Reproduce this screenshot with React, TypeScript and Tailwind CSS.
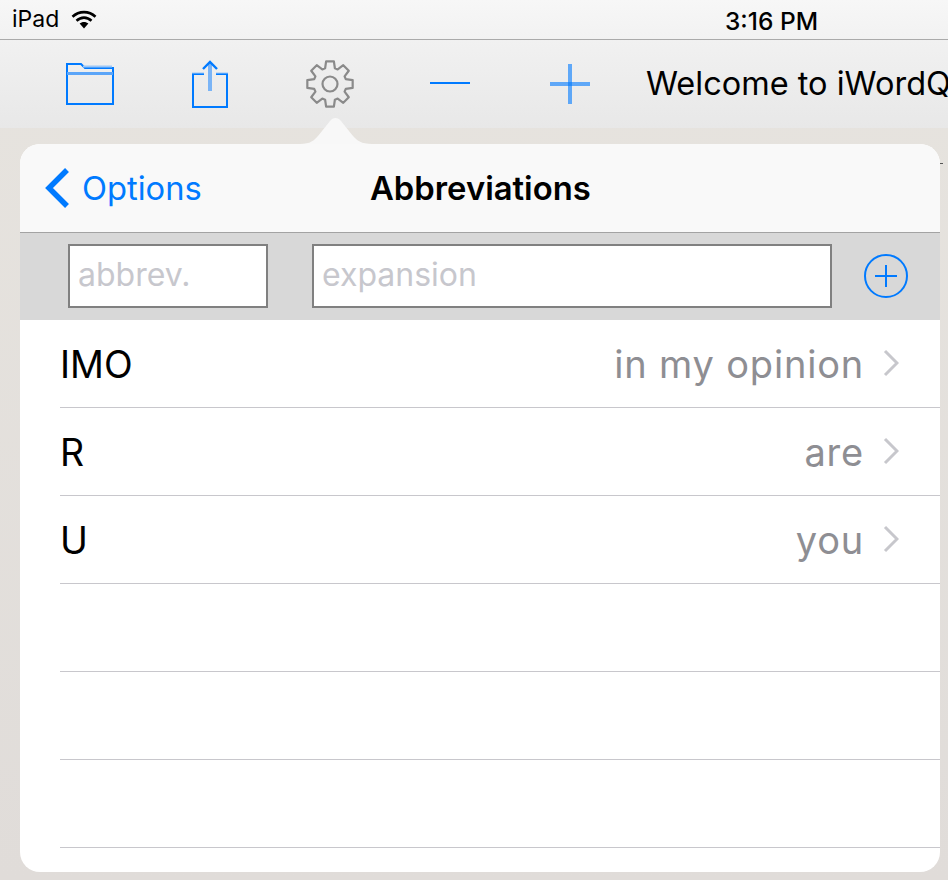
const font = "[font-family:Inter,'Liberation_Sans',sans-serif]";

const rows = [
  { abbrev: "IMO", expansion: "in my opinion" },
  { abbrev: "R", expansion: "are" },
  { abbrev: "U", expansion: "you" },
  { abbrev: "", expansion: "" },
  { abbrev: "", expansion: "" },
  { abbrev: "", expansion: "" },
];

// 8 teeth, worked out once so the outline stays symmetric
const gearPoints = Array.from({ length: 8 }, (_, i) => {
  const a = (i * Math.PI) / 4 - Math.PI / 2;
  const pt = (r: number, d: number) =>
    `${(24 + r * Math.cos(a + d)).toFixed(2)},${(24 + r * Math.sin(a + d)).toFixed(2)}`;
  return [pt(16.5, -0.3), pt(23, -0.17), pt(23, 0.17), pt(16.5, 0.3)].join(" ");
}).join(" ");

function FolderIcon() {
  return (
    <svg width="48" height="42" viewBox="0 0 48 42" fill="none">
      <path d="M1 41V1H15L19 5H47V41Z" stroke="#007aff" strokeWidth="2" />
      <path d="M17 3.5H46" stroke="#9cc7f7" strokeWidth="2" />
      <path d="M1 10.5H47" stroke="#5ba5f8" strokeWidth="3" />
    </svg>
  );
}

function ShareIcon() {
  return (
    <svg width="36" height="48" viewBox="0 0 36 48" fill="none">
      <path d="M12 14H1V47H35V14H24" stroke="#007aff" strokeWidth="2" />
      <path d="M0 13H12M24 13H36" stroke="#9cc7f7" strokeWidth="1" />
      <path d="M18 3V31" stroke="#7ab4f6" strokeWidth="4" />
      <path d="M11 9L18 2L25 9" stroke="#007aff" strokeWidth="2.4" />
    </svg>
  );
}

function GearIcon() {
  return (
    <svg width="48" height="48" viewBox="0 0 48 48" fill="none">
      <polygon points={gearPoints} stroke="#8a8a8a" strokeWidth="2.2" strokeLinejoin="round" />
      <circle cx="24" cy="24" r="7.5" stroke="#8a8a8a" strokeWidth="2.2" />
    </svg>
  );
}

function WifiIcon() {
  return (
    <svg width="26" height="19" viewBox="0 0 26 19" fill="none">
      <path d="M1.5 6.8C8 .6 18 .6 24.5 6.8" stroke="#000" strokeWidth="2.6" />
      <path d="M5.5 10.8C10 6.6 16 6.6 20.5 10.8" stroke="#000" strokeWidth="2.6" />
      <path d="M8.6 13.6C11 11.4 15 11.4 17.4 13.6L13 18.4Z" fill="#000" />
    </svg>
  );
}

function BackIcon() {
  return (
    <svg width="26" height="42" viewBox="0 0 26 42" fill="none">
      <path d="M23 3L5 21L23 39" stroke="#007aff" strokeWidth="5.5" />
    </svg>
  );
}

function AddIcon() {
  return (
    <svg width="44" height="44" viewBox="0 0 44 44" fill="none">
      <circle cx="22" cy="22" r="21" stroke="#007aff" strokeWidth="2" />
      <path d="M11 22H33M22 11V33" stroke="#007aff" strokeWidth="2" />
    </svg>
  );
}

function Chevron() {
  return (
    <svg width="16" height="28" viewBox="0 0 16 28" fill="none">
      <path d="M2 2L14 14L2 26" stroke="#c7c7cc" strokeWidth="3" />
    </svg>
  );
}

export default function App() {
  return (
    <div className={`relative flex h-[880px] w-[948px] flex-col overflow-hidden bg-gradient-to-b from-[#e7e4df] to-[#e0dcd9] ${font}`}>
      {/* Status bar */}
      <div className="relative flex h-[40px] shrink-0 items-center border-b border-[#aaaaaa] bg-gradient-to-b from-[#f7f7f7] to-[#f2f2f2] pl-3 text-black">
        <span className="text-[23px] leading-none">iPad</span>
        <span className="ml-[12px] flex">
          <WifiIcon />
        </span>
        <span className="absolute left-[725px] top-[8px] text-[24.5px] font-medium leading-[26px]">3:16 PM</span>
      </div>

      {/* Toolbar */}
      <div className="flex h-[88px] shrink-0 items-center overflow-hidden whitespace-nowrap bg-gradient-to-b from-[#f1f1f1] to-[#e8e8e8] pl-[66px]">
        <span className="flex w-[126px] shrink-0 pb-[1px]">
          <FolderIcon />
        </span>
        <span className="flex w-[114px] shrink-0 pb-[1px]">
          <ShareIcon />
        </span>
        <span className="flex w-[124px] shrink-0 pb-[1px]">
          <GearIcon />
        </span>
        <span className="mb-[2px] h-[2px] w-[40px] shrink-0 bg-[#007aff]" />
        <span className="relative ml-[80px] h-[40px] w-[40px] shrink-0">
          <span className="absolute left-0 top-[18px] h-[4px] w-[40px] bg-[#007aff]/60" />
          <span className="absolute left-[18px] top-0 h-[40px] w-[4px] bg-[#007aff]/60" />
        </span>
        <span className="ml-[56px] shrink-0 text-[32.5px] leading-none text-black">Welcome to iWordQ</span>
      </div>

      {/* Popover caret */}
      <svg className="absolute left-[296px] top-[116px]" width="80" height="30" viewBox="0 0 80 30" fill="#f8f8f8">
        <path d="M0 28C12 28 16 27 22 20L34 5C37 1 42 1 45 5L57 20C63 27 68 28 80 28V30H0Z" />
      </svg>
      <span className="absolute left-[940px] top-[163px] h-[1px] w-[3px] bg-[#555555]" />

      <div className="flex min-h-0 flex-1 flex-col pb-2 pl-5 pr-2 pt-4">
        <div className="relative flex min-h-0 flex-1 flex-col overflow-hidden rounded-[20px] bg-white">
          {/* Nav bar */}
          <div className="relative flex h-[89px] shrink-0 items-center border-b border-[#a3a3a3] bg-[#f9f9f9] pl-6">
            <BackIcon />
            <span className="ml-[12px] text-[32.7px] leading-none text-[#007aff]">Options</span>
            <span className="absolute left-[350px] top-[26px] text-[32.8px] font-semibold leading-[36px] text-black">Abbreviations</span>
          </div>

          {/* Add row */}
          <div className="flex h-[87px] shrink-0 items-center bg-[#d8d8d8] pb-[2px] pl-12">
            <input
              placeholder="abbrev."
              className="h-[64px] w-[200px] border-2 border-[#808080] bg-white pb-[2px] pl-[8px] text-[32px] text-black outline-none placeholder:text-[#c7c7cd]"
            />
            <input
              placeholder="expansion"
              className="ml-[44px] h-[64px] w-[520px] border-2 border-[#808080] bg-white pb-[2px] pl-[8px] text-[32px] text-black outline-none placeholder:text-[#c7c7cd]"
            />
            <span className="ml-8 flex">
              <AddIcon />
            </span>
          </div>

          {/* Abbreviation list */}
          <div className="flex flex-col pl-10">
            {rows.map((row, i) => (
              <div key={i} className="flex h-[88px] shrink-0 items-center border-b border-[#c8c7cc] pr-[41px]">
                {row.abbrev && <span className="pt-[3px] text-[37.5px] leading-none text-black">{row.abbrev}</span>}
                {row.expansion && (
                  <>
                    <span className="ml-auto text-[38px] leading-none tracking-[0.8px] text-[#8e8e93]">{row.expansion}</span>
                    <span className="mb-[2px] ml-[19px] flex">
                      <Chevron />
                    </span>
                  </>
                )}
              </div>
            ))}
          </div>
        </div>
      </div>
    </div>
  );
}
